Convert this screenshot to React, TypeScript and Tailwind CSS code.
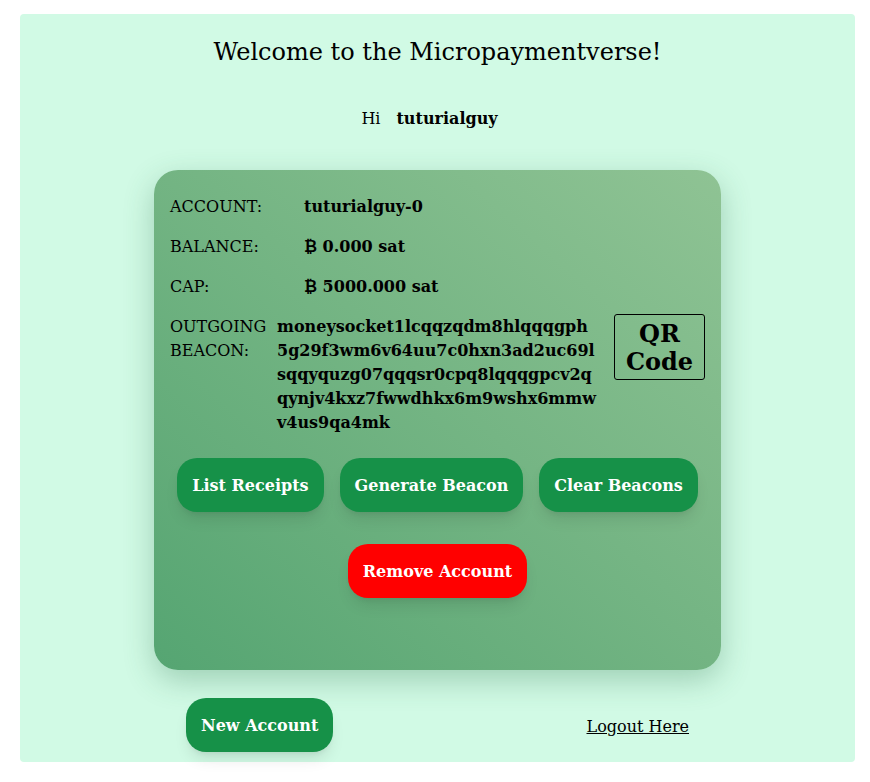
export default function App() {
  const beacon = [
    "moneysocket1lcqqzqdm8hlqqqgph",
    "5g29f3wm6v64uu7c0hxn3ad2uc69l",
    "sqqyquzg07qqqsr0cpq8lqqqgpcv2q",
    "qynjv4kxz7fwwdhkx6m9wshx6mmw",
    "v4us9qa4mk",
  ];

  const btn = "h-[54px] rounded-[20px] px-[15px] pt-px font-bold text-white shadow-lg";

  return (
    <div className="min-h-screen bg-white pt-[14px] font-['DejaVu_Serif',serif] text-black">
      <div className="ml-5 flex w-[835px] flex-col items-center rounded bg-[#d1fae5] pt-[22px] pb-[10px]">
        <h1 className="text-2xl leading-8">Welcome to the Micropaymentverse!</h1>

        <div className="mt-[39px] flex gap-4 pr-4 text-base leading-6">
          <span>Hi</span>
          <span className="font-bold">tuturialguy</span>
        </div>

        {/* account card */}
        <div className="mt-[39px] flex w-[567px] flex-col rounded-3xl bg-linear-to-tr from-[#55a572] to-[#8fc394] px-4 pt-4 pb-[72px] shadow-[0_10px_30px_rgba(40,110,70,0.3)]">
          <div className="flex h-10 items-center pt-px">
            <span className="w-[134px]">ACCOUNT:</span>
            <span className="font-bold">tuturialguy-0</span>
          </div>
          <div className="flex h-10 items-center pt-px">
            <span className="w-[134px]">BALANCE:</span>
            <span className="font-bold">
              <span className="font-['DejaVu_Sans',sans-serif]">₿</span> 0.000 sat
            </span>
          </div>
          <div className="flex h-10 items-center pt-px">
            <span className="w-[134px]">CAP:</span>
            <span className="font-bold">
              <span className="font-['DejaVu_Sans',sans-serif]">₿</span> 5000.000 sat
            </span>
          </div>

          <div className="mt-2 flex leading-6">
            <span className="w-[107px] pt-px">
              OUTGOING
              <br />
              BEACON:
            </span>
            <div className="flex w-[337px] flex-col pt-px font-bold">
              {beacon.map((line) => (
                <span key={line}>{line}</span>
              ))}
            </div>
            <div className="flex h-[66px] w-[91px] items-center justify-center rounded-[3px] border border-black pt-px text-center text-2xl leading-7 font-bold">
              QR
              <br />
              Code
            </div>
          </div>

          <div className="mt-[23px] flex justify-center gap-4">
            <button className={`${btn} bg-[#169148]`}>List Receipts</button>
            <button className={`${btn} bg-[#169148]`}>Generate Beacon</button>
            <button className={`${btn} bg-[#169148]`}>Clear Beacons</button>
          </div>

          <div className="mt-8 flex justify-center">
            <button className={`${btn} bg-[#ff0000]`}>Remove Account</button>
          </div>
        </div>

        <div className="mt-7 flex w-[503px] items-center justify-between">
          <button className={`${btn} bg-[#169148]`}>New Account</button>
          <a href="#" className="pt-1 underline">
            Logout Here
          </a>
        </div>
      </div>
    </div>
  );
}
